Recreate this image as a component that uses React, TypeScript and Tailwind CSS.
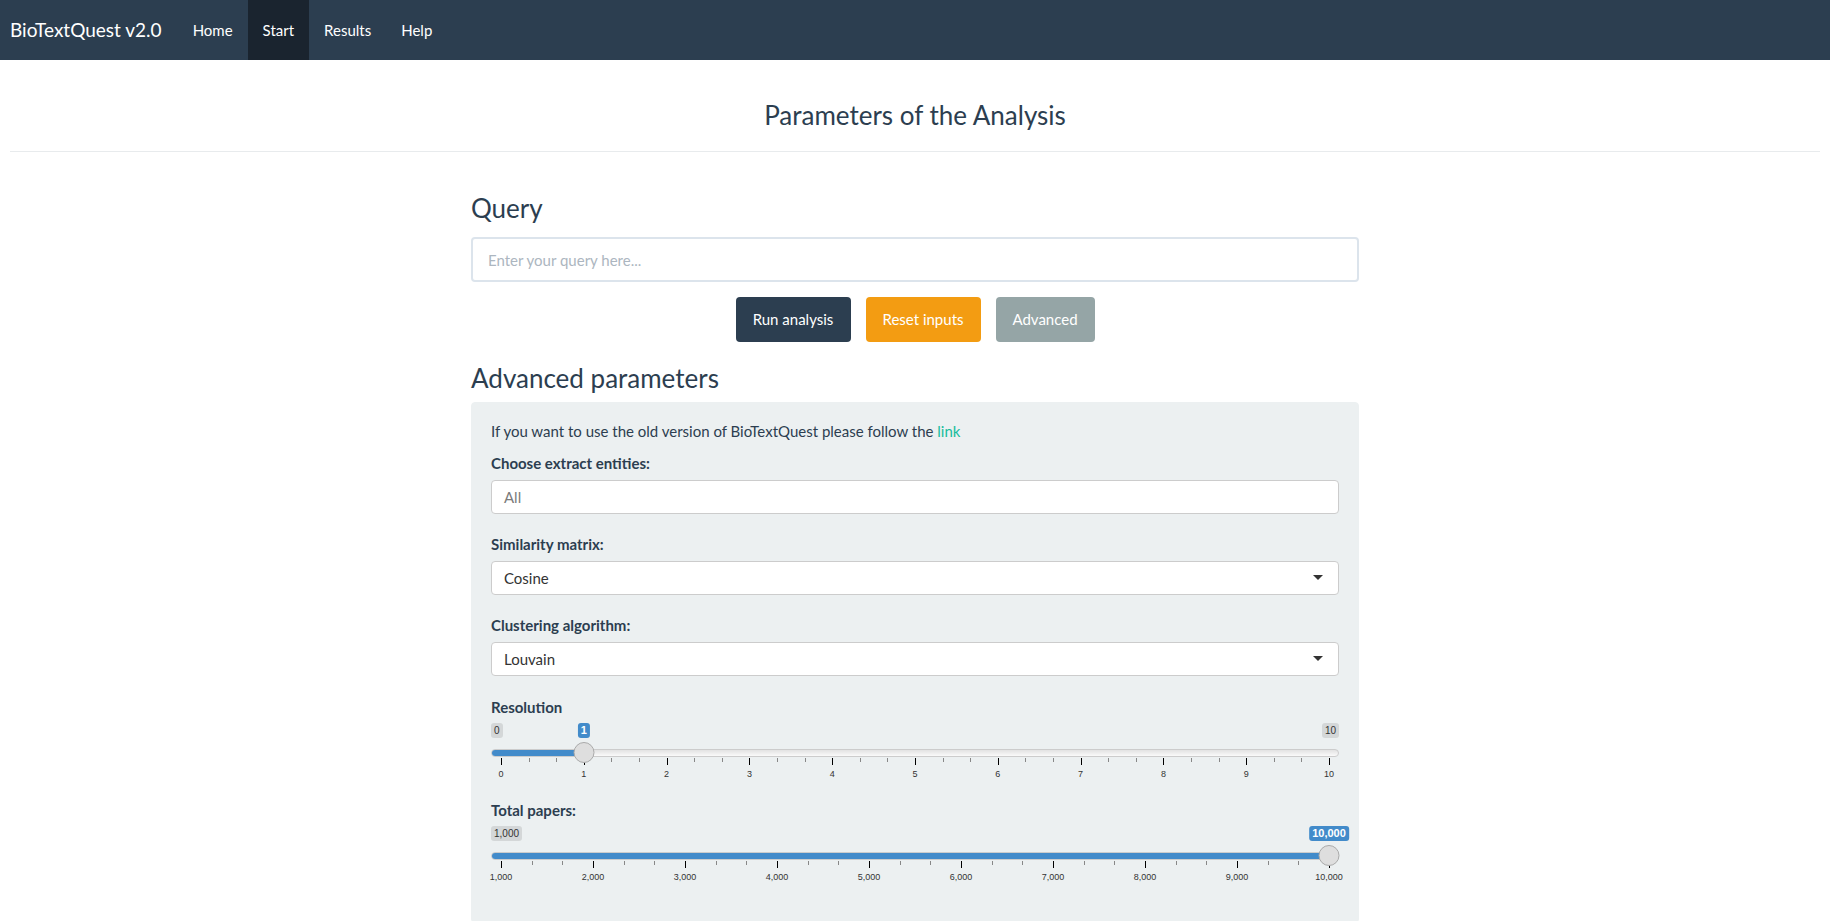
import React from 'react';

const lato = { fontFamily: 'Lato, "Open Sans", sans-serif' };

function Slider({ min, max, value, labels }: { min: string; max: string; value: number; labels: string[] }) {
  const n = labels.length - 1;
  const pos = (value / n) * 100;
  const minor: number[] = [];
  for (let i = 0; i < n; i++) {
    minor.push(((i + 1 / 3) / n) * 100, ((i + 2 / 3) / n) * 100);
  }
  const atEnd = value === n;
  return (
    <div className="relative h-[67px] w-full" style={{ fontFamily: '"Liberation Sans", Arial, sans-serif' }}>
      {/* min / max labels */}
      <div className="flex justify-between pt-[5px] text-[10px] leading-[13px] text-[#333]">
        <span className={`rounded-[3px] bg-black/10 px-[3px] py-[1px] ${value === 0 ? 'invisible' : ''}`}>{min}</span>
        <span className={`rounded-[3px] bg-black/10 px-[3px] py-[1px] ${atEnd ? 'invisible' : ''}`}>{max}</span>
      </div>

      {/* track */}
      <div className="mt-[11px] h-[8px] overflow-hidden rounded-full border border-[#ccc] bg-gradient-to-b from-[#e2e2e2] to-[#fafafa]">
        <div className="h-full bg-[#428bca]" style={{ width: `calc(${pos}% + ${10 - pos / 5}px)` }}></div>
      </div>

      <div className="absolute left-[10px] right-[10px] top-0 h-full">
        {/* grid */}
        {labels.map((l, i) => (
          <div key={l} className="absolute top-[40px]" style={{ left: `${(i / n) * 100}%` }}>
            <div className="h-[7px] w-px bg-black"></div>
            <div className="absolute top-[11px] -translate-x-1/2 whitespace-nowrap text-[9px] leading-[10px] text-[#333]">{l}</div>
          </div>
        ))}
        {minor.map((m) => (
          <div key={m} className="absolute top-[40px] h-[4px] w-px bg-[#888]" style={{ left: `${m}%` }}></div>
        ))}

        {/* handle + value */}
        <div
          className="absolute top-[24px] h-[21px] w-[21px] -translate-x-1/2 rounded-full border border-[#aaa] bg-[#dedede]"
          style={{ left: `${pos}%` }}
        ></div>
        <span
          className="absolute top-[5px] -translate-x-1/2 whitespace-nowrap rounded-[3px] bg-[#428bca] px-[3px] py-[1px] text-[11px] font-bold leading-[13px] text-white"
          style={{ left: `${pos}%` }}
        >
          {labels[value]}
        </span>
      </div>
    </div>
  );
}

function SelectBox({ text }: { text: string }) {
  return (
    <div className="flex h-[34px] items-center justify-between rounded-[4px] border border-[#ccc] bg-white pl-[12px] pr-[15px] text-[15px] text-[#333]">
      {text}
      <span className="h-0 w-0 border-x-[5px] border-t-[5px] border-x-transparent border-t-[#333]"></span>
    </div>
  );
}

function Field({ label, children, className }: { label: string; children: React.ReactNode; className?: string }) {
  return (
    <div className={className}>
      <div className="mb-[6px] font-bold leading-[21px]">{label}</div>
      {children}
    </div>
  );
}

export default function App() {
  const resLabels = ['0', '1', '2', '3', '4', '5', '6', '7', '8', '9', '10'];
  const paperLabels = ['1,000', '2,000', '3,000', '4,000', '5,000', '6,000', '7,000', '8,000', '9,000', '10,000'];

  return (
    <div className="min-h-screen bg-white text-[#2c3e50]" style={lato}>
      {/* navbar */}
      <nav className="flex h-[60px] items-stretch bg-[#2c3e50] text-white">
        <div className="flex items-center pl-[10px] pr-[16px] text-[19px]">BioTextQuest v2.0</div>
        <a className="flex items-center px-[15px] text-[15px]">Home</a>
        <a className="flex items-center bg-[#1a242f] px-[15px] text-[15px]">Start</a>
        <a className="flex items-center px-[15px] text-[15px]">Results</a>
        <a className="flex items-center px-[15px] text-[15px]">Help</a>
      </nav>

      {/* title */}
      <h2 className="mt-[41px] text-center text-[26px] leading-[1.1]">Parameters of the Analysis</h2>
      <hr className="mx-[10px] mt-[21px] border-t border-[#e8ebed]" />

      <div className="mx-auto flex w-[888px] flex-col">
        <h3 className="mt-[42px] text-[26px] leading-[1.1]">Query</h3>
        <input
          className="mt-[15px] h-[45px] w-full rounded-[4px] border-2 border-[#dce4ec] px-[15px] text-[15px] outline-none placeholder:text-[#acb6c0]"
          placeholder="Enter your query here..."
        />
        <div className="mt-[15px] flex justify-center gap-[15px] text-[15px] text-white">
          <button className="h-[45px] w-[115px] rounded-[4px] bg-[#2c3e50]">Run analysis</button>
          <button className="h-[45px] w-[115px] rounded-[4px] bg-[#f39c12]">Reset inputs</button>
          <button className="h-[45px] w-[99px] rounded-[4px] bg-[#95a5a6]">Advanced</button>
        </div>

        <h3 className="mt-[22px] text-[26px] leading-[1.1]">Advanced parameters</h3>
        <div className="mt-[9px] flex flex-col rounded-[4px] border border-[#ecf0f1] bg-[#ecf0f1] px-[19px] pb-[34px] pt-[18px] text-[15px]">
          <p className="leading-[21px]">
            If you want to use the old version of BioTextQuest please follow the <a className="text-[#18bc9c]">link</a>
          </p>

          <Field label="Choose extract entities:" className="mt-[11px]">
            <div className="flex h-[34px] items-center rounded-[4px] border border-[#ccc] bg-white pl-[12px] text-[15px] text-[#7b7b7b]">All</div>
          </Field>

          <Field label="Similarity matrix:" className="mt-[20px]">
            <SelectBox text="Cosine" />
          </Field>

          <Field label="Clustering algorithm:" className="mt-[20px]">
            <SelectBox text="Louvain" />
          </Field>

          <div className="mt-[21px] font-bold leading-[21px]">Resolution</div>
          <Slider min="0" max="10" value={1} labels={resLabels} />

          <div className="mt-[15px] font-bold leading-[21px]">Total papers:</div>
          <Slider min="1,000" max="10,000" value={9} labels={paperLabels} />
        </div>
      </div>
    </div>
  );
}
